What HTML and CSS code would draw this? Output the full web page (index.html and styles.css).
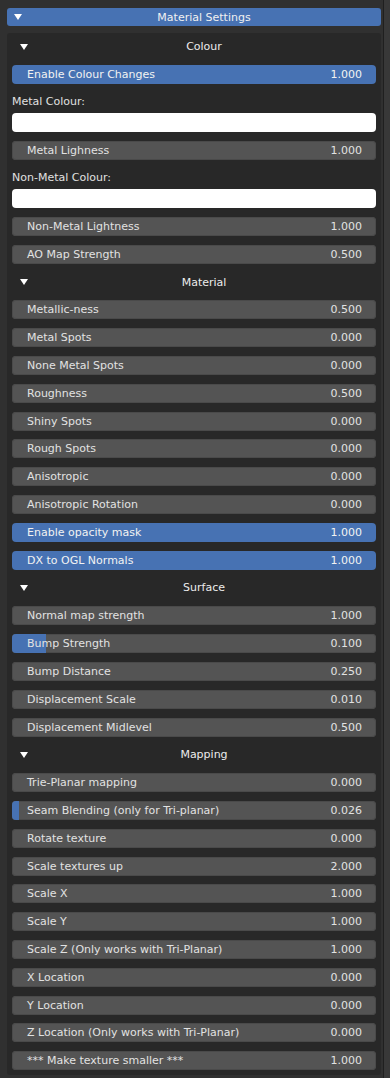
FILE: index.html
```html
<!doctype html>
<html>
<head>
<meta charset="utf-8">
<title>Material Settings</title>
<link rel="stylesheet" href="styles.css">
</head>
<body>
<div class="region">
  <div class="panel">
    <div class="panel-header">
      <span class="tri"></span>
      <span class="title">Material Settings</span>
    </div>
    <div class="panel-body">
      <div class="sub-header"><span class="tri"></span><span class="title">Colour</span></div>
      <div class="slider on"><span>Enable Colour Changes</span><span>1.000</span></div>
      <div class="prop-label">Metal Colour:</div>
      <div class="swatch"></div>
      <div class="slider"><span>Metal Lighness</span><span>1.000</span></div>
      <div class="prop-label">Non-Metal Colour:</div>
      <div class="swatch"></div>
      <div class="slider"><span>Non-Metal Lightness</span><span>1.000</span></div>
      <div class="slider"><span>AO Map Strength</span><span>0.500</span></div>

      <div class="sub-header"><span class="tri"></span><span class="title">Material</span></div>
      <div class="slider"><span>Metallic-ness</span><span>0.500</span></div>
      <div class="slider"><span>Metal Spots</span><span>0.000</span></div>
      <div class="slider"><span>None Metal Spots</span><span>0.000</span></div>
      <div class="slider"><span>Roughness</span><span>0.500</span></div>
      <div class="slider"><span>Shiny Spots</span><span>0.000</span></div>
      <div class="slider"><span>Rough Spots</span><span>0.000</span></div>
      <div class="slider"><span>Anisotropic</span><span>0.000</span></div>
      <div class="slider"><span>Anisotropic Rotation</span><span>0.000</span></div>
      <div class="slider on"><span>Enable opacity mask</span><span>1.000</span></div>
      <div class="slider on"><span>DX to OGL Normals</span><span>1.000</span></div>

      <div class="sub-header"><span class="tri"></span><span class="title">Surface</span></div>
      <div class="slider"><span>Normal map strength</span><span>1.000</span></div>
      <div class="slider"><i class="fill" style="width: 9.3%"></i><span>Bump Strength</span><span>0.100</span></div>
      <div class="slider"><span>Bump Distance</span><span>0.250</span></div>
      <div class="slider"><span>Displacement Scale</span><span>0.010</span></div>
      <div class="slider"><span>Displacement Midlevel</span><span>0.500</span></div>

      <div class="sub-header"><span class="tri"></span><span class="title">Mapping</span></div>
      <div class="slider"><span>Trie-Planar mapping</span><span>0.000</span></div>
      <div class="slider"><i class="fill" style="width: 1.8%"></i><span>Seam Blending (only for Tri-planar)</span><span>0.026</span></div>
      <div class="slider"><span>Rotate texture</span><span>0.000</span></div>
      <div class="slider"><span>Scale textures up</span><span>2.000</span></div>
      <div class="slider"><span>Scale X</span><span>1.000</span></div>
      <div class="slider"><span>Scale Y</span><span>1.000</span></div>
      <div class="slider"><span>Scale Z (Only works with Tri-Planar)</span><span>1.000</span></div>
      <div class="slider"><span>X Location</span><span>0.000</span></div>
      <div class="slider"><span>Y Location</span><span>0.000</span></div>
      <div class="slider"><span>Z Location (Only works with Tri-Planar)</span><span>0.000</span></div>
      <div class="slider"><span>*** Make texture smaller ***</span><span>1.000</span></div>
    </div>
  </div>
</div>
<div class="edge"></div>
</body>
</html>
```

FILE: styles.css
```css
html, body {
  margin: 0;
  padding: 0;
}

body {
  display: flex;
  height: 1078px;
  overflow: hidden;
  background: #303030;
  font-family: "DejaVu Sans", sans-serif;
  font-size: 11px;
  color: #e6e6e6;
}

.region {
  width: 374px;
  padding: 8px 2px 0 7px;
}

.edge {
  flex: 1;
  border-left: 1px solid #1f1f1f;
  background: #383838;
}

/* top panel header */
.panel-header {
  display: flex;
  align-items: center;
  height: 18px;
  background: #4772b3;
  border-radius: 3px;
  color: #f0f0f0;
}
.panel-header .tri {
  margin-left: 7px;
  border-left: 4px solid transparent;
  border-right: 4px solid transparent;
  border-top: 6px solid #fff;
}
.panel-header .title {
  flex: 1;
  padding-left: 5px;
  text-align: center;
}

/* body */
.panel-body {
  display: flex;
  flex-direction: column;
  gap: 8.82px;
  margin-top: 7px;
  padding: 4px 5px 4.5px;
  background: #282828;
  border-radius: 3px;
}

.sub-header {
  display: flex;
  align-items: center;
  height: 19px;
  color: #ececec;
}
.sub-header .tri {
  margin-left: 8px;
  border-left: 4px solid transparent;
  border-right: 4px solid transparent;
  border-top: 6px solid #fff;
}
.sub-header .title {
  flex: 1;
  padding-left: 4px;
  text-align: center;
}

.slider {
  position: relative;
  display: flex;
  justify-content: space-between;
  align-items: center;
  height: 19px;
  padding: 0 14px 0 15px;
  background: #545454;
  border-radius: 4px;
  box-shadow: inset 0 0 0 1px #4a4a4a;
  overflow: hidden;
  color: #e2e2e2;
}
.slider span {
  position: relative;
  white-space: nowrap;
}
.slider.on {
  background: #4772b3;
  box-shadow: none;
  color: #f2f2f2;
}
.slider .fill {
  position: absolute;
  left: 0;
  top: 0;
  bottom: 0;
  background: #4772b3;
}

.prop-label {
  height: 19px;
  line-height: 17px;
  margin-bottom: -7.4px;
  color: #e0e0e0;
}

.swatch {
  height: 19px;
  background: #fff;
  border-radius: 4px;
}
```
